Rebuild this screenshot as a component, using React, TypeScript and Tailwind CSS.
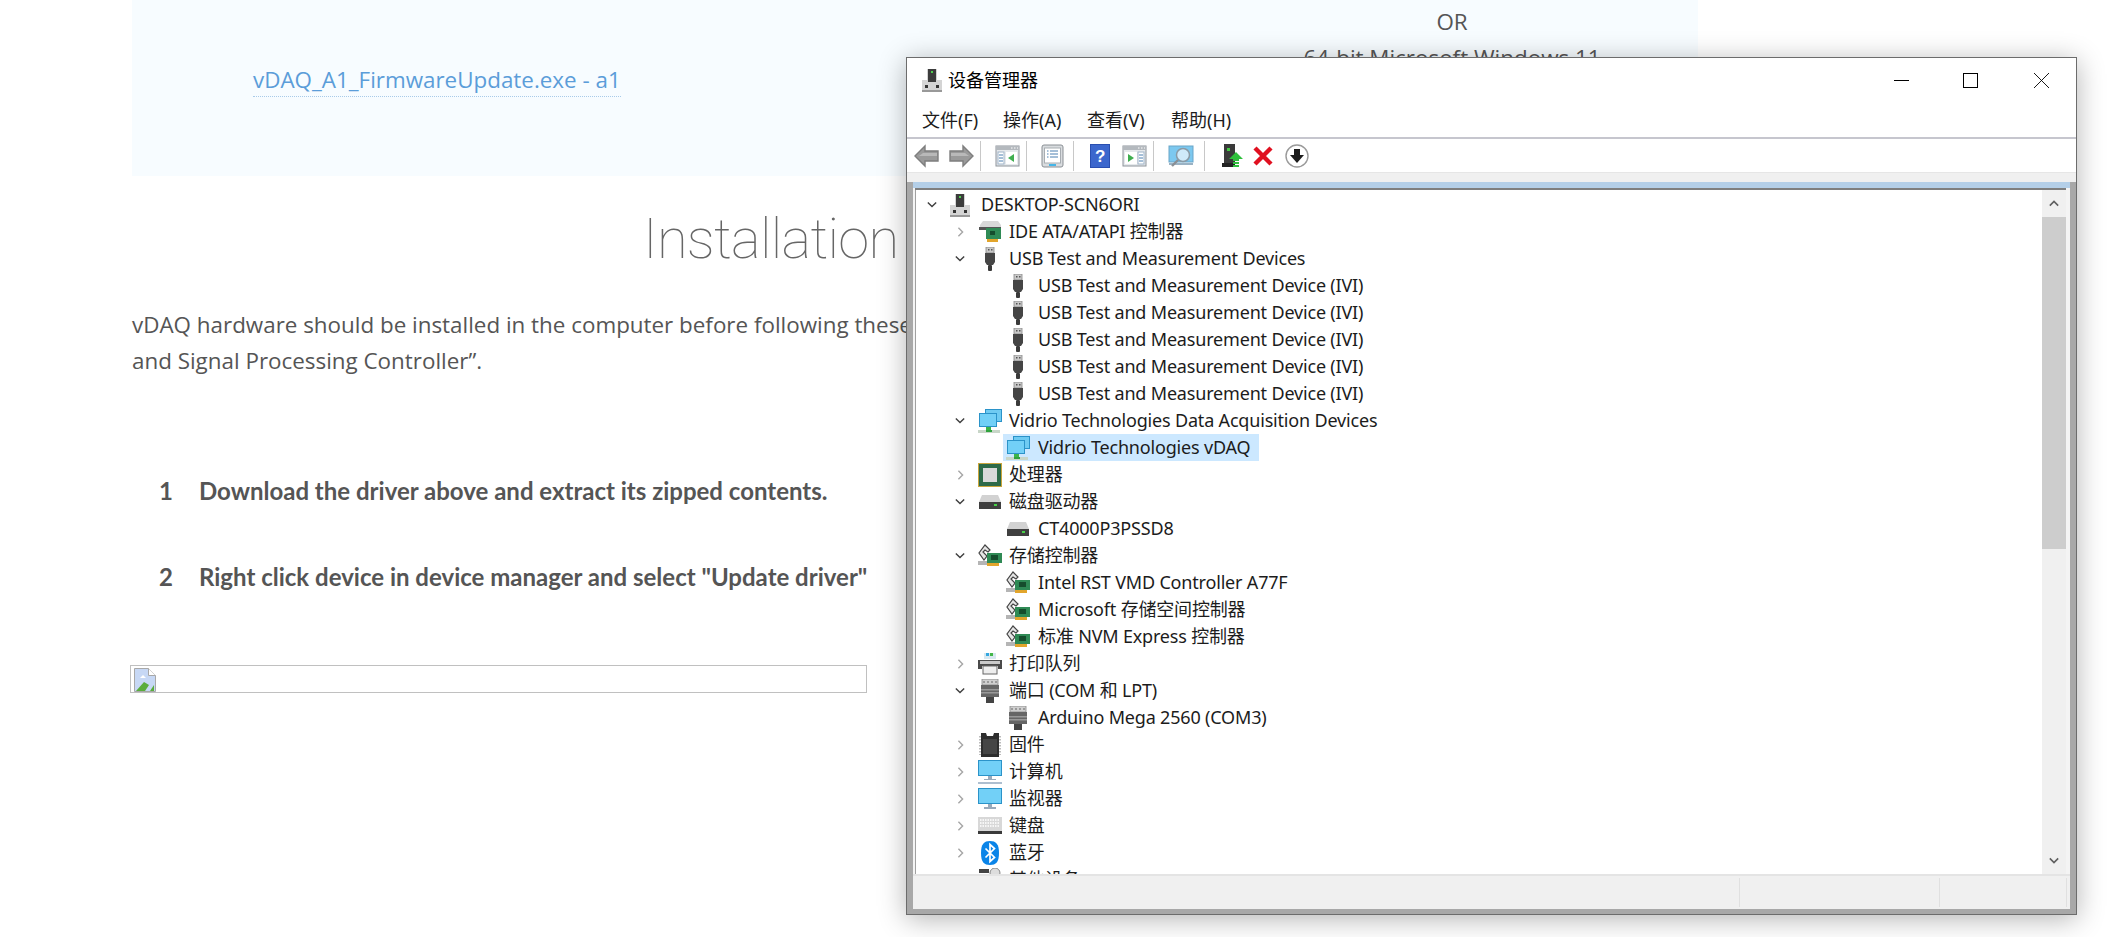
import React from "react";

type IconName = "computer" | "ide" | "usb" | "net" | "cpu" | "disk" | "storage" | "printer" | "port" | "chip" | "pc" | "monitor" | "keyboard" | "bt" | "mouse";

function TreeIcon({ name }: { name: IconName }) {
  const c = "w-[24px] h-[24px] shrink-0";
  switch (name) {
    case "computer":
      return (
        <svg viewBox="0 0 24 24" className={c}>
          <path d="M2 12h5V1h10v11h5v12H2z" fill="#d4d4d4" />
          <rect x="8" y="1" width="8" height="13" fill="#3c3c3c" />
          <rect x="11" y="3" width="2" height="2" fill="#4fd04f" />
          <rect x="5" y="17" width="3" height="3" fill="#333" />
          <rect x="16" y="17" width="3" height="3" fill="#333" />
          <rect x="2" y="22" width="20" height="2" fill="#999" />
        </svg>
      );
    case "ide":
      return (
        <svg viewBox="0 0 24 24" className={c}>
          <path d="M2 5l3-4h15l3 4v3H2z" fill="#d8d8d8" />
          <rect x="1" y="7" width="22" height="3" fill="#555" />
          <rect x="8" y="8" width="15" height="11" fill="#2f8a55" />
          <rect x="12" y="11" width="5" height="4" fill="#164d2d" />
          <rect x="9" y="19" width="11" height="3" fill="#e2a52c" />
        </svg>
      );
    case "usb":
      return (
        <svg viewBox="0 0 24 24" className={c}>
          <rect x="8" y="0" width="8" height="6" fill="#c9c9c9" stroke="#888" strokeWidth="0.8" />
          <rect x="10" y="2" width="1.5" height="1.5" fill="#555" />
          <rect x="13" y="2" width="1.5" height="1.5" fill="#555" />
          <path d="M7 6h10v9l-2 3H9l-2-3z" fill="#454545" />
          <rect x="10" y="18" width="4" height="6" rx="1" fill="#3a3a3a" />
        </svg>
      );
    case "net":
      return (
        <svg viewBox="0 0 24 24" className={c}>
          <rect x="7" y="0" width="17" height="13" fill="#2b93c9" />
          <rect x="8" y="1" width="15" height="11" fill="#6fcbf2" />
          <rect x="1" y="4" width="18" height="14" fill="#2b93c9" />
          <rect x="2" y="5" width="16" height="12" fill="#72d0f7" />
          <rect x="8" y="18" width="5" height="3" fill="#3db54a" />
          <rect x="0" y="21" width="22" height="3" fill="#c8d6c8" />
          <rect x="8" y="21" width="6" height="2" fill="#2fa33d" />
        </svg>
      );
    case "cpu":
      return (
        <svg viewBox="0 0 24 24" className={c}>
          <rect x="0" y="0" width="24" height="24" fill="#c9a53c" />
          <rect x="1" y="1" width="22" height="22" fill="#2d6a48" />
          <rect x="5" y="5" width="14" height="14" fill="#d9d9d9" />
        </svg>
      );
    case "disk":
      return (
        <svg viewBox="0 0 24 24" className={c}>
          <path d="M4 5h16l3 7H1z" fill="#d2d2d2" />
          <rect x="1" y="12" width="22" height="7" fill="#3f3f3f" />
          <rect x="16" y="14" width="3" height="2" fill="#47d147" />
        </svg>
      );
    case "storage":
      return (
        <svg viewBox="0 0 24 24" className={c}>
          <path d="M7 1l5 5-2 2-3-2-2 2 4 4-3 4-5-7z" fill="#e6e6e6" stroke="#444" strokeWidth="1.2" />
          <rect x="0" y="17" width="10" height="4" fill="#b5b5b5" />
          <rect x="9" y="9" width="15" height="10" fill="#2f8a55" />
          <rect x="13" y="11" width="7" height="5" fill="#164d2d" />
          <rect x="9" y="19" width="12" height="3" fill="#e2a52c" />
        </svg>
      );
    case "printer":
      return (
        <svg viewBox="0 0 24 24" className={c}>
          <rect x="6" y="1" width="12" height="6" fill="#d8e8f0" />
          <rect x="8" y="1" width="3" height="3" fill="#34a7e0" />
          <rect x="12" y="1" width="3" height="3" fill="#43b649" />
          <path d="M0 8h24v9h-4v-3H4v3H0z" fill="#4a4a4a" />
          <rect x="2" y="9" width="20" height="3" fill="#c9c9c9" />
          <rect x="5" y="14" width="14" height="8" fill="#eee" stroke="#666" strokeWidth="1" />
        </svg>
      );
    case "port":
      return (
        <svg viewBox="0 0 24 24" className={c}>
          <rect x="4" y="0" width="16" height="6" fill="#cfcfcf" stroke="#888" strokeWidth="0.8" />
          <path d="M6 2v2M10 2v2M14 2v2M18 2v2" stroke="#666" strokeWidth="1" />
          <path d="M3 6h18v12H3z" fill="#666" />
          <rect x="3" y="10" width="18" height="1.5" fill="#999" />
          <rect x="3" y="13" width="18" height="1.5" fill="#999" />
          <rect x="8" y="18" width="8" height="6" fill="#444" />
        </svg>
      );
    case "chip":
      return (
        <svg viewBox="0 0 24 24" className={c}>
          <path d="M3 0h5l1 3h6l1-3h5v24H3z" fill="#2e2e2e" />
          <path d="M2 3v19M22 3v19" stroke="#bbb" strokeWidth="2" strokeDasharray="1.5 1.5" />
          <rect x="5" y="6" width="14" height="15" fill="#454545" />
        </svg>
      );
    case "pc":
      return (
        <svg viewBox="0 0 24 24" className={c}>
          <rect x="0" y="0" width="24" height="16" fill="#2b93c9" />
          <rect x="1" y="1" width="22" height="14" fill="#72d0f7" />
          <rect x="10" y="16" width="4" height="3" fill="#9ab" />
          <rect x="6" y="19" width="12" height="1" fill="#9ab" />
          <rect x="0" y="22" width="24" height="2" fill="#aebfd0" />
        </svg>
      );
    case "monitor":
      return (
        <svg viewBox="0 0 24 24" className={c}>
          <rect x="0" y="1" width="24" height="16" fill="#2b93c9" />
          <rect x="1" y="2" width="22" height="14" fill="#72d0f7" />
          <rect x="10" y="17" width="4" height="3" fill="#9ab" />
          <rect x="6" y="20" width="12" height="2" fill="#9ab" />
        </svg>
      );
    case "keyboard":
      return (
        <svg viewBox="0 0 24 24" className={c}>
          <rect x="0" y="3" width="24" height="14" fill="#d8d8d8" />
          <path d="M2 6h20M2 9h20M2 12h20" stroke="#fff" strokeWidth="1.4" strokeDasharray="1.5 1" />
          <rect x="0" y="17" width="24" height="3" fill="#3a3a3a" />
        </svg>
      );
    case "bt":
      return (
        <svg viewBox="0 0 24 24" className={c}>
          <path d="M12 0c6 0 9 3 9 12s-3 12-9 12-9-3-9-12S6 0 12 0z" fill="#0a84e8" />
          <path d="M7.5 7.5l9 9L12 20.5V3.5l4.5 4-9 9" fill="none" stroke="#fff" strokeWidth="1.7" />
        </svg>
      );
    case "mouse":
      return (
        <svg viewBox="0 0 24 24" className={c}>
          <rect x="1" y="1" width="10" height="4" fill="#444" />
          <rect x="12" y="0" width="10" height="10" rx="5" fill="#ddd" stroke="#888" />
        </svg>
      );
  }
}

type Row = { t: string; l: 0 | 1 | 2; i: IconName; c?: "o" | "c"; sel?: boolean };
const usbChild: Row = { t: "USB Test and Measurement Device (IVI)", l: 2, i: "usb" };
const rows: Row[] = [
  { t: "DESKTOP-SCN6ORI", l: 0, i: "computer", c: "o" },
  { t: "IDE ATA/ATAPI 控制器", l: 1, i: "ide", c: "c" },
  { t: "USB Test and Measurement Devices", l: 1, i: "usb", c: "o" },
  usbChild, usbChild, usbChild, usbChild, usbChild,
  { t: "Vidrio Technologies Data Acquisition Devices", l: 1, i: "net", c: "o" },
  { t: "Vidrio Technologies vDAQ", l: 2, i: "net", sel: true },
  { t: "处理器", l: 1, i: "cpu", c: "c" },
  { t: "磁盘驱动器", l: 1, i: "disk", c: "o" },
  { t: "CT4000P3PSSD8", l: 2, i: "disk" },
  { t: "存储控制器", l: 1, i: "storage", c: "o" },
  { t: "Intel RST VMD Controller A77F", l: 2, i: "storage" },
  { t: "Microsoft 存储空间控制器", l: 2, i: "storage" },
  { t: "标准 NVM Express 控制器", l: 2, i: "storage" },
  { t: "打印队列", l: 1, i: "printer", c: "c" },
  { t: "端口 (COM 和 LPT)", l: 1, i: "port", c: "o" },
  { t: "Arduino Mega 2560 (COM3)", l: 2, i: "port" },
  { t: "固件", l: 1, i: "chip", c: "c" },
  { t: "计算机", l: 1, i: "pc", c: "c" },
  { t: "监视器", l: 1, i: "monitor", c: "c" },
  { t: "键盘", l: 1, i: "keyboard", c: "c" },
  { t: "蓝牙", l: 1, i: "bt", c: "c" },
  { t: "其他设备", l: 1, i: "mouse", c: "c" },
];

function Chevron({ c }: { c?: "o" | "c" }) {
  return (
    <span className="w-[20px] h-[27px] flex items-center justify-center shrink-0">
      {c === "o" && (
        <svg viewBox="0 0 12 8" className="w-[10px] h-[7px]">
          <path d="M1 1.5l5 5 5-5" fill="none" stroke="#404040" strokeWidth="1.7" />
        </svg>
      )}
      {c === "c" && (
        <svg viewBox="0 0 8 12" className="w-[7px] h-[10px]">
          <path d="M1.5 1l5 5-5 5" fill="none" stroke="#a6a6a6" strokeWidth="1.7" />
        </svg>
      )}
    </span>
  );
}

function TreeRow({ r }: { r: Row }) {
  const indent = r.l === 0 ? "pl-[6px]" : r.l === 1 ? "pl-[34px]" : "pl-[62px]";
  return (
    <div className={`h-[27px] flex items-center shrink-0 ${indent}`}>
      <Chevron c={r.c} />
      {r.sel ? (
        <div className="h-[27px] ml-[5px] pl-[3px] pr-[9px] flex items-center bg-[#cce8ff]">
          <TreeIcon name={r.i} />
          <span className="ml-[8px] pb-[2px] whitespace-nowrap">{r.t}</span>
        </div>
      ) : r.l === 0 ? (
        <div className="h-[27px] ml-[6px] flex items-center">
          <TreeIcon name={r.i} />
          <span className="ml-[9px] pb-[2px] whitespace-nowrap">{r.t}</span>
        </div>
      ) : r.l === 1 ? (
        <div className="h-[27px] ml-[8px] flex items-center">
          <TreeIcon name={r.i} />
          <span className="ml-[7px] pb-[2px] whitespace-nowrap">{r.t}</span>
        </div>
      ) : (
        <div className="h-[27px] ml-[8px] flex items-center">
          <TreeIcon name={r.i} />
          <span className="ml-[8px] pb-[2px] whitespace-nowrap">{r.t}</span>
        </div>
      )}
    </div>
  );
}

function Sep() {
  return <span className="block w-[1px] h-[30px] bg-[#c8c8c8] shrink-0" />;
}

function Panel({ arrow }: { arrow: "l" | "r" }) {
  return (
    <svg viewBox="0 0 25 22" className="w-[25px] h-[22px]">
      <rect x="1" y="1" width="23" height="20" fill="#e6e9ec" stroke="#8d949b" />
      <rect x="1" y="1" width="23" height="4" fill="#b4b9be" />
      <path d="M16 3h1.5M19 3h1.5M22 3h1" stroke="#fff" />
      {arrow === "l" ? (
        <>
          <rect x="3" y="7" width="6" height="12" fill="#fff" stroke="#9fb4c8" />
          <path d="M4 10h4M4 13h4M4 16h4" stroke="#4a7fb0" />
          <rect x="11" y="7" width="11" height="12" fill="#fff" />
          <path d="M19 9v8l-6-4z" fill="#3fae4f" />
        </>
      ) : (
        <>
          <rect x="3" y="7" width="12" height="12" fill="#fff" />
          <path d="M6 9v8l6-4z" fill="#3fae4f" />
          <rect x="16" y="7" width="6" height="12" fill="#fff" stroke="#9fb4c8" />
          <path d="M17 10h4M17 13h4M17 16h4" stroke="#4a7fb0" />
        </>
      )}
    </svg>
  );
}

function Toolbar() {
  return (
    <div className="h-[33px] bg-white flex items-center pl-[7px] shrink-0">
      <svg viewBox="0 0 25 24" className="w-[25px] h-[24px]">
        <path d="M1 12L11 2v5h13v10H11v5z" fill="#9a9a9a" stroke="#7e7e7e" strokeWidth="1.4" />
        <path d="M5 12h18v-3H9z" fill="#b9b9b9" />
      </svg>
      <svg viewBox="0 0 25 24" className="w-[25px] h-[24px] ml-[10px]">
        <path d="M24 12L14 2v5H1v10h13v5z" fill="#9a9a9a" stroke="#7e7e7e" strokeWidth="1.4" />
        <path d="M20 12H2V9h14z" fill="#b9b9b9" />
      </svg>
      <span className="block ml-[6px]"><Sep /></span>
      <span className="ml-[14px] flex"><Panel arrow="l" /></span>
      <span className="block ml-[6px]"><Sep /></span>
      <svg viewBox="0 0 23 24" className="w-[23px] h-[24px] ml-[14px]">
        <rect x="1" y="1" width="21" height="22" rx="2" fill="#d9dcdf" stroke="#8a8f94" />
        <rect x="3.5" y="4" width="16" height="15" fill="#fff" stroke="#a8adb2" />
        <path d="M6 7h1.5M9 7h8M6 10h1.5M9 10h8M6 13h1.5M9 13h8" stroke="#4a7fb0" />
        <rect x="8" y="20" width="7" height="2" fill="#45b6e8" />
      </svg>
      <span className="block ml-[9px]"><Sep /></span>
      <svg viewBox="0 0 20 24" className="w-[20px] h-[24px] ml-[16px]">
        <rect x="0" y="0" width="20" height="24" fill="#2a4fb0" />
        <rect x="1" y="1" width="18" height="22" fill="#3c67cd" />
        <text x="10" y="18" textAnchor="middle" fontSize="17" fontWeight="700" fill="#fff" fontFamily="Liberation Sans, sans-serif">?</text>
      </svg>
      <span className="ml-[12px] flex"><Panel arrow="r" /></span>
      <span className="block ml-[6px]"><Sep /></span>
      <svg viewBox="0 0 26 24" className="w-[26px] h-[24px] ml-[14px]">
        <rect x="1" y="2" width="24" height="16" fill="#7cc8ef" stroke="#6aa5c8" />
        <rect x="1" y="19" width="24" height="2" fill="#9ab2c4" />
        <circle cx="15" cy="11" r="6.5" fill="#cfeafa" stroke="#8a9aa5" strokeWidth="1.5" />
        <path d="M10 16l-6 6" stroke="#8a8f94" strokeWidth="2.4" />
      </svg>
      <span className="block ml-[10px]"><Sep /></span>
      <svg viewBox="0 0 22 24" className="w-[22px] h-[24px] ml-[17px]">
        <rect x="2" y="0" width="11" height="20" fill="#3a3a3a" />
        <rect x="5" y="4" width="3" height="3" fill="#43c943" />
        <rect x="0" y="19" width="13" height="4" fill="#222" />
        <path d="M14 8l7 7h-4v2h-6v-2H7z" fill="#2fbf3c" />
        <rect x="11" y="18" width="6" height="2" fill="#2fbf3c" />
        <rect x="11" y="21" width="6" height="2" fill="#2fbf3c" />
      </svg>
      <svg viewBox="0 0 20 20" className="w-[20px] h-[20px] ml-[9px]">
        <path d="M2 2l16 16M18 2L2 18" stroke="#e01020" strokeWidth="4.4" />
      </svg>
      <svg viewBox="0 0 24 24" className="w-[24px] h-[24px] ml-[12px]">
        <circle cx="12" cy="12" r="11" fill="#fff" stroke="#9a9a9a" strokeWidth="1.4" />
        <path d="M9 5h6v6h4l-7 8-7-8h4z" fill="#1c1c1c" />
      </svg>
    </div>
  );
}

function Scrollbar() {
  return (
    <div className="w-[24px] h-full bg-[#f0f0f0] flex flex-col shrink-0">
      <div className="h-[27px] flex items-center justify-center shrink-0">
        <svg viewBox="0 0 12 8" className="w-[10px] h-[7px]">
          <path d="M1 6.5l5-5 5 5" fill="none" stroke="#606060" strokeWidth="2" />
        </svg>
      </div>
      <div className="h-[332px] bg-[#cdcdcd] shrink-0" />
      <div className="flex-1" />
      <div className="h-[27px] flex items-center justify-center shrink-0">
        <svg viewBox="0 0 12 8" className="w-[10px] h-[7px]">
          <path d="M1 1.5l5 5 5-5" fill="none" stroke="#606060" strokeWidth="2" />
        </svg>
      </div>
    </div>
  );
}

function DeviceManager() {
  const font = { fontFamily: '"Noto Sans", "Noto Sans CJK SC", sans-serif' };
  return (
    <div
      style={font}
      className="absolute left-[906px] top-[57px] w-[1171px] h-[858px] border border-[#6c6c6c] bg-[#a8a8a8] flex flex-col text-[18px] leading-[24px] tracking-[-0.18px] text-[#1c1c1c] shadow-[0_4px_26px_rgba(0,0,0,0.3)]"
    >
      <div className="h-[44px] bg-white flex items-center pl-[13px] shrink-0">
        <TreeIcon name="computer" />
        <span className="ml-[4px] tracking-normal text-black">设备管理器</span>
        <div className="ml-auto flex items-center">
          <svg viewBox="0 0 15 15" className="w-[15px] h-[15px]">
            <path d="M0 7.5h15" stroke="#000" />
          </svg>
          <svg viewBox="0 0 15 15" className="w-[15px] h-[15px] ml-[54px]">
            <rect x="0.5" y="0.5" width="14" height="14" fill="none" stroke="#000" />
          </svg>
          <svg viewBox="0 0 15 15" className="w-[15px] h-[15px] ml-[56px] mr-[27px]">
            <path d="M0 0l15 15M15 0L0 15" stroke="#000" strokeWidth="0.9" />
          </svg>
        </div>
      </div>
      <div className="h-[35px] bg-white flex items-center pl-[15px] pt-[1px] tracking-normal shrink-0">
        <span className="w-[81px]">文件(F)</span>
        <span className="w-[84px]">操作(A)</span>
        <span className="w-[84px]">查看(V)</span>
        <span>帮助(H)</span>
      </div>
      <div className="h-[2px] bg-[#c6c6ce] shrink-0" />
      <Toolbar />
      <div className="h-[10px] bg-[#f0f0f0] border-t border-[#e6e6e6] shrink-0" />
      <div className="flex-1 min-h-0 px-[6px] pb-[5px] flex flex-col">
        <div className="h-[6px] bg-[#b4cfe8] shrink-0" />
        <div className="flex-1 min-h-0 flex flex-col">
          <div className="flex-1 min-h-0 flex pl-[2px] pr-[4px] bg-[#f4f4f4]">
            <div className="flex-1 min-w-0 flex flex-col">
              <div className="h-[2px] bg-[#7f7f7f] shrink-0" />
              <div className="flex-1 min-h-0 flex bg-white border-l border-[#a0a0a0]">
                <div className="flex-1 min-w-0 overflow-hidden flex flex-col pt-[1px]">
                  {rows.map((r, i) => (
                    <TreeRow key={i} r={r} />
                  ))}
                </div>
                <Scrollbar />
              </div>
            </div>
          </div>
          <div className="h-[35px] bg-[#f0f0f0] border-t-2 border-[#e4e4e4] flex shrink-0">
            <div className="w-[826px]" />
            <div className="w-[200px] my-[2px] border-l border-[#e0e0e0]" />
            <div className="w-[128px] my-[2px] border-l border-[#e0e0e0] border-r" />
          </div>
        </div>
      </div>
    </div>
  );
}

function BrokenImage() {
  return (
    <svg viewBox="0 0 22 24" className="w-[22px] h-[24px]">
      <path d="M0.5 0.5h14l7 7v16h-21z" fill="#c7d8f5" stroke="#a8a8a8" />
      <path d="M14.5 0.5v7h7" fill="#fff" stroke="#a8a8a8" />
      <path d="M9 7l3 3H6z" fill="#fff" />
      <path d="M2 23l8-9 5 3-4 6z" fill="#5aad3c" />
      <path d="M16 23l4-6v6z" fill="#5aad3c" />
    </svg>
  );
}

export default function App() {
  return (
    <div className="relative w-full h-[937px] overflow-hidden bg-white text-[#555]" style={{ fontFamily: '"Open Sans", sans-serif' }}>
      <div className="pl-[132px] w-[1698px]">
        <div className="h-[176px] bg-[#f7fcff] grid grid-cols-[1074px_492px] text-[22.4px] leading-[36px]">
          <div className="pl-[121px] pt-[62px]">
            <a className="text-[#5b9dd9] border-b border-dotted border-[#a9cbe9] inline-block leading-[33px]">vDAQ_A1_FirmwareUpdate.exe - a1</a>
          </div>
          <div className="text-center pt-[4px]">
            <div>OR</div>
            <div>64-bit Microsoft Windows 11</div>
          </div>
        </div>
        <h2 className="mt-[23px] pl-[511px] h-[80px] text-[56px] leading-[80px] tracking-[-0.7px] font-thin text-[#666]" style={{ fontFamily: 'Roboto, sans-serif' }}>Installation</h2>
        <p className="mt-[28px] text-[22.4px] leading-[36px] whitespace-nowrap">
          vDAQ hardware should be installed in the computer before following these
          <br />
          and Signal Processing Controller”.
        </p>
        <ol className="mt-[94px] pl-[27px] text-[24px] leading-[36px] font-bold" style={{ fontFamily: 'Lato, sans-serif' }}>
          <li className="flex">
            <span className="w-[40px]">1</span>
            <span>Download the driver above and extract its zipped contents.</span>
          </li>
          <li className="flex mt-[50px]">
            <span className="w-[40px]">2</span>
            <span>Right click device in device manager and select "Update driver"</span>
          </li>
        </ol>
        <div className="mt-[70px] -ml-[2px] w-[737px] h-[28px] border border-[#c0c0c0] pl-[3px] pt-[2px]">
          <BrokenImage />
        </div>
      </div>
      <DeviceManager />
    </div>
  );
}
